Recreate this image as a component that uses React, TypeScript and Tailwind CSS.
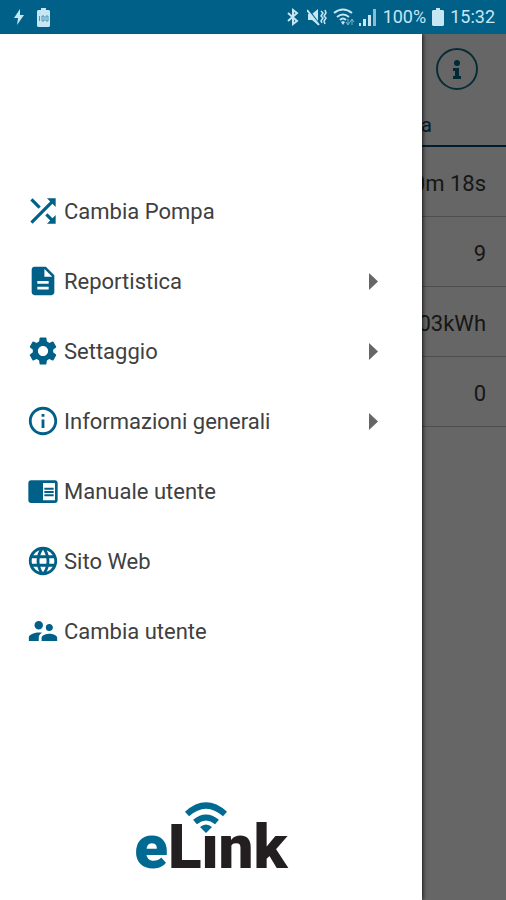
import type { ReactNode } from "react";
import {
  MdChromeReaderMode,
  MdDescription,
  MdInfoOutline,
  MdLanguage,
  MdSettings,
  MdShuffle,
  MdSupervisorAccount,
} from "react-icons/md";

type Entry = { label: string; icon: ReactNode; nested?: boolean };

const entries: Entry[] = [
  { label: "Cambia Pompa", icon: <MdShuffle size={38} className="shrink-0" /> },
  { label: "Reportistica", icon: <MdDescription size={34} />, nested: true },
  { label: "Settaggio", icon: <MdSettings size={34} />, nested: true },
  { label: "Informazioni generali", icon: <MdInfoOutline size={34} />, nested: true },
  { label: "Manuale utente", icon: <MdChromeReaderMode size={32} /> },
  { label: "Sito Web", icon: <MdLanguage size={34} /> },
  { label: "Cambia utente", icon: <MdSupervisorAccount size={34} /> },
];

const readings = ["0m 18s", "9", "03kWh", "0"];

function StatusBar() {
  return (
    <header className="flex h-[34px] shrink-0 items-center justify-between bg-[#006088] pr-[11px] pl-[13px] text-[#c5e6f2]">
      <div className="flex items-center gap-3">
        <svg width="12" height="18" viewBox="0 0 12 18" fill="currentColor" aria-hidden="true">
          <path d="M7 1 1 10h4l-1 7 7-10H7z" />
        </svg>
        <svg width="13" height="19" viewBox="0 0 13 19" aria-hidden="true">
          <path d="M4 0h5v2h3l1 1v15l-1 1H1l-1-1V3l1-1h3z" fill="currentColor" />
          <path d="M2.5 8v5M5 8h2v5H5zM9 8h2v5H9z" stroke="#4f93b0" fill="none" />
        </svg>
      </div>
      <div className="flex items-center">
        <svg className="mr-2" width="12" height="18" viewBox="0 0 12 18" fill="none" stroke="currentColor" strokeWidth="2" aria-hidden="true">
          <path d="m1 5 9 8-4 3V2l4 3-9 8" />
        </svg>
        <svg className="mr-1.5" width="20" height="18" viewBox="0 0 20 18" aria-hidden="true">
          <path d="M1 6h4l6-5v16l-6-5H1z" fill="currentColor" />
          <path d="M1 1 13 17" stroke="#006088" strokeWidth="1.5" />
          <path d="M0 2 12 17" stroke="currentColor" strokeWidth="2" />
          <path d="m14 3 2 2-2 3 2 2-2 3 1 2M18 2l1 3-2 3 2 2-2 3 1 3" stroke="currentColor" strokeWidth="1.5" fill="none" />
        </svg>
        <svg className="mr-1" width="22" height="18" viewBox="0 0 22 18" fill="none" stroke="currentColor" strokeWidth="2" aria-hidden="true">
          <path d="M1 5q9-7 18 0M4 9q6-5 12 0M7 12q3-3 6 0" />
          <path d="m8 14 2-1 2 1-2 3z" fill="currentColor" stroke="none" />
          <path d="M15 11v5m-2-2 2 3 2-3M19 17v-5m-2 2 2-3 2 3" strokeWidth="1" opacity=".6" />
        </svg>
        <svg className="mr-1.5" width="18" height="18" viewBox="0 0 18 18" fill="currentColor" aria-hidden="true">
          <path d="M0 15h2v3H0zM4 11h3v7H4zM9 7h3v11H9z" />
          <path d="M14 1h3v17h-3z" opacity=".7" />
        </svg>
        <span className="text-lg">100%</span>
        <svg className="mx-1.5" width="12" height="18" viewBox="0 0 12 18" fill="currentColor" aria-hidden="true">
          <path d="M4 0h4v2h3l1 1v14l-1 1H1l-1-1V3l1-1h3z" />
        </svg>
        <time className="text-lg">15:32</time>
      </div>
    </header>
  );
}

function Overview() {
  return (
    <main className="flex grow flex-col bg-white text-[#3a3a3a]">
      <div className="flex h-[70px] items-center justify-end pr-7">
        <button
          type="button"
          aria-label="Info"
          className="flex size-[42px] items-center justify-center rounded-full border-2 border-[#146f88] text-[#006a88]"
        >
          <svg width="8" height="19" viewBox="0 0 8 19" fill="currentColor" aria-hidden="true">
            <circle cx="4" cy="3" r="3" />
            <path d="M0 8h6v8h2v3H0v-3h2v-5H0z" />
          </svg>
        </button>
      </div>
      <div className="flex h-[43px] items-center justify-end border-b-2 border-[#004a78] pr-[74px] text-xl text-[#004a78]">
        a
      </div>
      <ul>
        {readings.map((value) => (
          <li
            key={value}
            className="flex h-[70px] items-center justify-end border-b border-[#c4c4c4] pt-1 pr-5 text-[22px]"
          >
            {value}
          </li>
        ))}
      </ul>
    </main>
  );
}

function Logo() {
  return (
    <div className="relative font-['Roboto',sans-serif] text-[62px] leading-[70px] font-black text-[#231f20]">
      <span className="text-[#006a92]">e</span>Link
      <svg
        className="absolute -top-3 left-[50px]"
        width="44"
        height="36"
        viewBox="0 0 44 36"
        fill="none"
        stroke="#006a92"
        strokeWidth="6"
        aria-hidden="true"
      >
        <path d="M16 18h17v16H16z" fill="#fff" stroke="none" />
        <path d="M3 14Q22-3 41 14M11 22q11-9 22 0" />
        <path d="M16 27q6-5 12 0l-6 6z" fill="#006a92" stroke="none" />
      </svg>
    </div>
  );
}

function Drawer() {
  return (
    <aside className="absolute inset-y-0 left-0 flex w-5/6 flex-col items-center justify-between bg-white pt-[142px] pb-[18px] shadow-[1px_0_4px_rgba(0,0,0,0.8)]">
      <nav className="w-full">
        <ul>
          {entries.map(({ label, icon, nested }) => (
            <li key={label}>
              <button
                type="button"
                className="flex h-[70px] w-full items-center gap-1 pr-11 pl-[26px] text-left text-[22px] text-[#404040]"
              >
                <span className="flex w-[34px] shrink-0 justify-center text-[#006088]">{icon}</span>
                <span className="grow">{label}</span>
                {nested && (
                  <svg width="9" height="17" viewBox="0 0 9 17" fill="#666" aria-hidden="true">
                    <path d="M0 0v17l9-8.500z" />
                  </svg>
                )}
              </button>
            </li>
          ))}
        </ul>
      </nav>
      <Logo />
    </aside>
  );
}

export default function App() {
  return (
    <div className="flex min-h-screen flex-col font-['Roboto',sans-serif]">
      <StatusBar />
      <div className="relative flex grow flex-col overflow-hidden">
        <Overview />
        <div className="absolute inset-0 bg-black/60" />
        <Drawer />
      </div>
    </div>
  );
}
